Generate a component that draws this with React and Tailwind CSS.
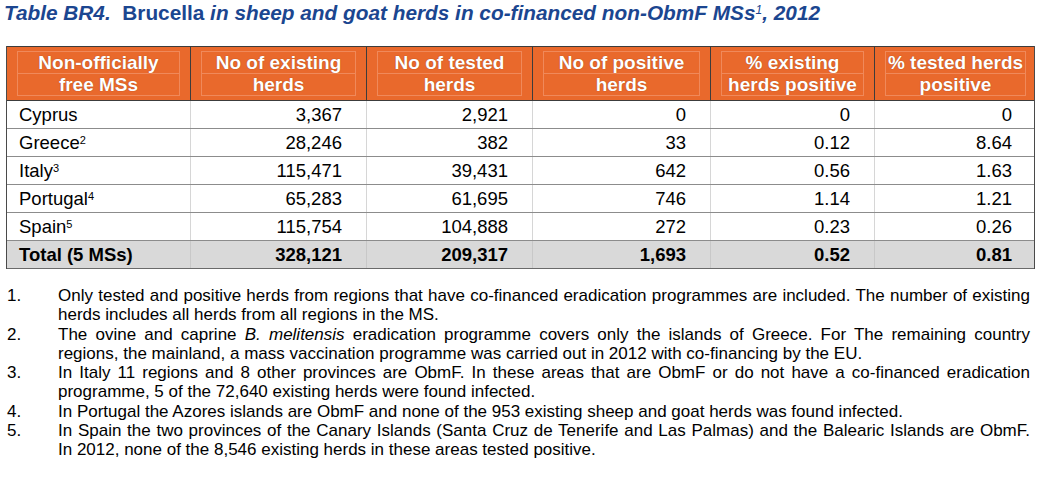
import React from 'react';

const font = { fontFamily: '"Liberation Sans", Arial, sans-serif' };

const headers = [
  ['Non-officially', 'free MSs'],
  ['No of existing', 'herds'],
  ['No of tested', 'herds'],
  ['No of positive', 'herds'],
  ['% existing', 'herds positive'],
  ['% tested herds', 'positive'],
];

const rows = [
  ['Cyprus', null, '3,367', '2,921', '0', '0', '0'],
  ['Greece', '2', '28,246', '382', '33', '0.12', '8.64'],
  ['Italy', '3', '115,471', '39,431', '642', '0.56', '1.63'],
  ['Portugal', '4', '65,283', '61,695', '746', '1.14', '1.21'],
  ['Spain', '5', '115,754', '104,888', '272', '0.23', '0.26'],
];

const total = ['Total (5 MSs)', '328,121', '209,317', '1,693', '0.52', '0.81'];

const notes = [
  ['1.', [
    'Only tested and positive herds from regions that have co-financed eradication programmes are included. The number of existing',
    'herds includes all herds from all regions in the MS.',
  ]],
  ['2.', [
    <>The ovine and caprine <i>B. melitensis</i> eradication programme covers only the islands of Greece. For The remaining country</>,
    'regions, the mainland, a mass vaccination programme was carried out in 2012 with co-financing by the EU.',
  ]],
  ['3.', [
    'In Italy 11 regions and 8 other provinces are ObmF. In these areas that are ObmF or do not have a co-financed eradication',
    'programme, 5 of the 72,640 existing herds were found infected.',
  ]],
  ['4.', [
    'In Portugal the Azores islands are ObmF and none of the 953 existing sheep and goat herds was found infected.',
  ]],
  ['5.', [
    'In Spain the two provinces of the Canary Islands (Santa Cruz de Tenerife and Las Palmas) and the Balearic Islands are ObmF.',
    'In 2012, none of the 8,546 existing herds in these areas tested positive.',
  ]],
];

const cols = 'grid grid-cols-[183px_176px_166px_178px_164px_162px]';

export default function App() {
  return (
    <div className="w-[1045px] h-[477px] bg-white text-black pl-[4px] pt-[1px]" style={font}>
      <h1 className="text-[20.8px] leading-[24px] font-bold italic text-[#1b4690]">
        Table BR4.&nbsp; <span className="not-italic">Brucella</span> in sheep and goat herds in co-financed non-ObmF MSs
        <sup className="text-[12px] font-normal">1</sup>, 2012
      </h1>

      <div className="ml-[2px] mt-[21px] w-[1029px] border-x border-[#4a4a4a]">
        <div className={`${cols} bg-[#e9692c] border-t border-b border-[#3c3c3c] h-[55px]`}>
          {headers.map((h, i) => (
            <div key={i} className={`flex items-center ${i > 0 ? 'border-l border-[#3c3c3c]' : ''}`}>
              <div className="mx-[10px] w-full border border-[#f0895a] text-white font-bold text-[19px] leading-[21px] text-center [text-shadow:0_0_1px_rgba(110,40,10,0.7)]">
                <div className="border-b border-[#f0895a] whitespace-nowrap">{h[0]}</div>
                <div className="whitespace-nowrap">{h[1]}</div>
              </div>
            </div>
          ))}
        </div>

        {rows.map((r) => (
          <div key={r[0]} className={`${cols} h-[28px] border-b border-[#8c8c8c] text-[18.5px] leading-[27px]`}>
            <div className="pl-[12px]">
              {r[0]}
              {r[1] && <sup className="text-[11px]">{r[1]}</sup>}
            </div>
            {r.slice(2).map((v, i) => (
              <div key={i} className="text-right pr-[24px] border-l border-[#d6d6d6]">{v}</div>
            ))}
          </div>
        ))}

        <div className={`${cols} h-[28px] bg-[#d9d9d9] border-b border-[#6a6a6a] text-[18.5px] leading-[27px] font-bold`}>
          <div className="pl-[12px]">{total[0]}</div>
          {total.slice(1).map((v, i) => (
            <div key={i} className="text-right pr-[24px] border-l border-[#c8c8c8]">{v}</div>
          ))}
        </div>
      </div>

      <div className="mt-[17px] text-[17px] leading-[19.3px]">
        {notes.map(([n, lines]) => (
          <div key={n} className="flex">
            <div className="w-[54px] pl-[3px] shrink-0">{n}</div>
            <div className="w-[972px]">
              {lines.map((l, i) => (
                <div
                  key={i}
                  className={i < lines.length - 1 ? 'text-justify [text-align-last:justify] whitespace-nowrap' : 'whitespace-nowrap'}
                >
                  {l}
                </div>
              ))}
            </div>
          </div>
        ))}
      </div>
    </div>
  );
}
